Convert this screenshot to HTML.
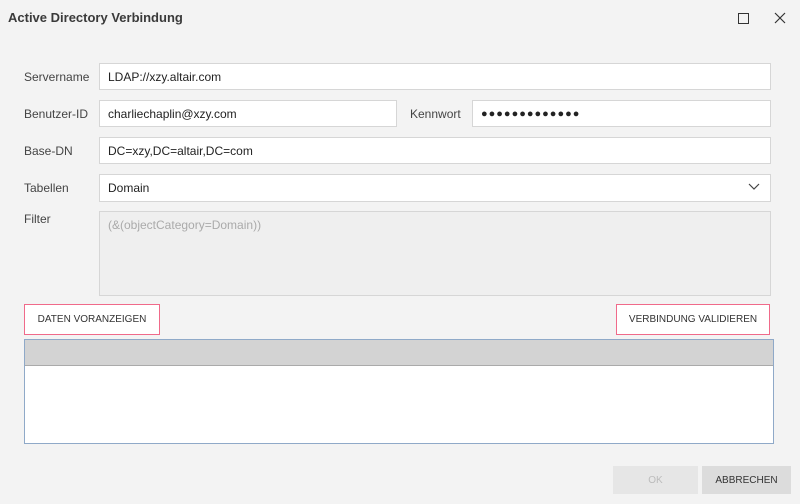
<!DOCTYPE html><html><head><style>
body{margin:0;width:800px;height:504px;background:#f3f3f3;font-family:"Liberation Sans",sans-serif;position:relative;overflow:hidden;color:#333}
.a{position:absolute}
.lbl{font-size:12px;color:#444}
.in{position:absolute;background:#fff;border:1px solid #d6d6d6;box-sizing:border-box;font-size:12px;padding-left:8px;display:flex;align-items:center;color:#222}
.btn{position:absolute;border:1px solid #f06a8a;background:#fff;font-size:10px;display:flex;align-items:center;justify-content:center;box-sizing:border-box;color:#333}
</style></head><body>
<div class="a" style="left:8px;top:10px;font-size:13px;font-weight:bold;color:#3a3a3a">Active Directory Verbindung</div>
<div class="a" style="left:738px;top:13px;width:9px;height:9px;border:1.3px solid #333"></div>
<svg class="a" style="left:774px;top:12px" width="12" height="12"><path d="M1 1L11 11M11 1L1 11" stroke="#333" stroke-width="1.2"/></svg>
<div class="a lbl" style="left:24px;top:70px">Servername</div>
<div class="in" style="left:99px;top:63px;width:672px;height:27px">LDAP://xzy.altair.com</div>
<div class="a lbl" style="left:24px;top:107px">Benutzer-ID</div>
<div class="in" style="left:99px;top:100px;width:298px;height:27px">charliechaplin@xzy.com</div>
<div class="a lbl" style="left:410px;top:107px">Kennwort</div>
<div class="in" style="left:472px;top:100px;width:299px;height:27px;font-size:11px;letter-spacing:1px">●●●●●●●●●●●●●</div>
<div class="a lbl" style="left:24px;top:144px">Base-DN</div>
<div class="in" style="left:99px;top:137px;width:672px;height:27px">DC=xzy,DC=altair,DC=com</div>
<div class="a lbl" style="left:24px;top:181px">Tabellen</div>
<div class="in" style="left:99px;top:174px;width:672px;height:28px">Domain</div>
<svg class="a" style="left:748px;top:183px" width="12" height="8"><path d="M1 1L6 6L11 1" stroke="#444" fill="none" stroke-width="1.2"/></svg>
<div class="a lbl" style="left:24px;top:212px">Filter</div>
<div class="in" style="left:99px;top:211px;width:672px;height:85px;align-items:flex-start;padding-top:6px;color:#aaa;background:#efefef">(&amp;(objectCategory=Domain))</div>
<div class="btn" style="left:24px;top:304px;width:136px;height:31px">DATEN VORANZEIGEN</div>
<div class="btn" style="left:616px;top:304px;width:154px;height:31px">VERBINDUNG VALIDIEREN</div>
<div class="a" style="left:24px;top:339px;width:750px;height:105px;border:1px solid #8fa9c8;background:#fff;box-sizing:border-box">
<div style="height:25px;background:#d3d3d3;border-bottom:1px solid #aaa"></div></div>
<div class="a" style="left:613px;top:466px;width:85px;height:28px;background:#e6e6e6;color:#bbb;font-size:10px;display:flex;align-items:center;justify-content:center">OK</div>
<div class="a" style="left:702px;top:466px;width:89px;height:28px;background:#dcdcdc;color:#333;font-size:10px;display:flex;align-items:center;justify-content:center">ABBRECHEN</div>
</body></html>
